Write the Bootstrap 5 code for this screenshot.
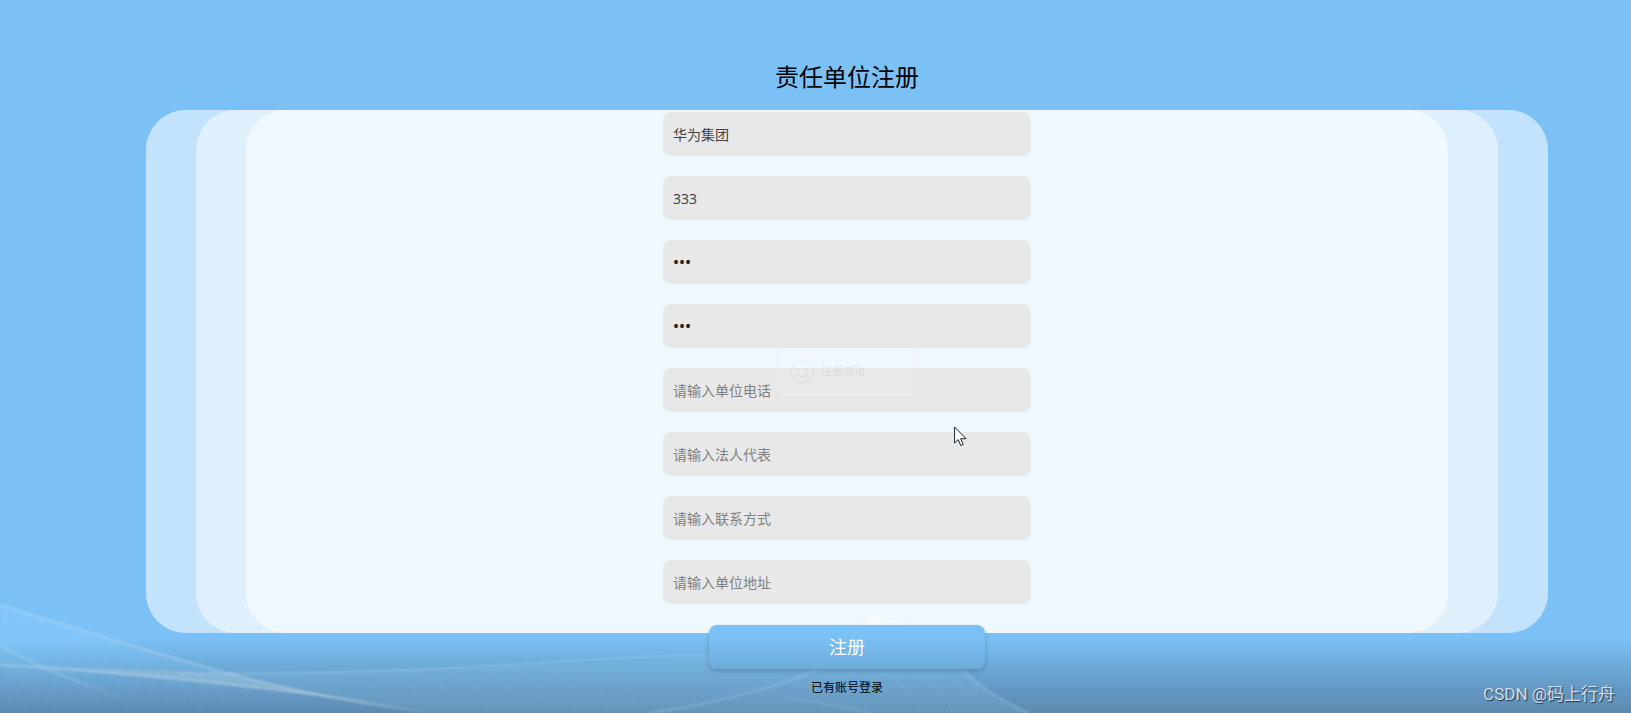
<!DOCTYPE html>
<html lang="zh-CN">
<head>
<meta charset="utf-8">
<meta name="viewport" content="width=device-width, initial-scale=1">
<title>责任单位注册</title>
<link href="https://cdn.jsdelivr.net/npm/bootstrap@5.3.0/dist/css/bootstrap.min.css" rel="stylesheet">
<style>
  body { font-family: "Noto Sans", "Noto Sans CJK SC", sans-serif; background: #7cc1f6; color: #000; }
  .page { padding: 60px 83px 16px 146px; isolation: isolate; }
  .scenery { z-index: -1; height: 113px; }
  .page-title { font-size: 24px; line-height: 34px; margin-bottom: 16px; font-weight: 400; }
  .layer { border-radius: 40px; box-shadow: inset 0 0 1px rgba(255,255,255,.5); }
  .layer-outer { background: rgba(255,255,255,.54); padding: 0 50px; }
  .layer-middle { background: rgba(255,255,255,.47); padding: 0 50px; }
  .layer-inner { background: rgba(255,255,255,.5); padding: 2px 16px 29px; }
  .fields { width: 368px; max-width: 100%; gap: 20px; }
  .field, .field:focus { height: 44px; padding: 0 10px; border: 0; border-radius: 8px; background: #e8e8e8; color: #444; font-size: 14px; }
  .field[type=password] { font-size: 16px; color: #222; }
  .field::placeholder { color: #808080; opacity: 1; }
  .submit, .submit:hover { width: 276px; max-width: 100%; height: 44px; margin-top: -8px; padding: 0; border: 0; border-radius: 8px; color: #fff; font-size: 18px; font-weight: 400;
    background: linear-gradient(#7cc1f6 25%, #6cabd9); box-shadow: 0 2px 5px rgba(0,0,0,.2); }
  .login-link { font-size: 12px; line-height: 18px; margin-top: 10px; color: #000; }
  .toast-note { width: 138px; height: 50px; padding: 0 11px; gap: 7px; opacity: .08; background: #fff; border: 1px solid #ccc; font-size: 11px; color: #333; }
  .pointer { left: 79%; top: -6px; }
  .watermark { right: 16px; bottom: 6px; font-family: Roboto, "Noto Sans CJK SC", sans-serif; font-size: 17px; line-height: 26px; color: #d3dfe8; text-shadow: 1px 1px 1px #23384a; }
</style>
</head>
<body>
<main class="page position-relative min-vh-100 overflow-hidden">
  <div class="scenery position-absolute start-0 bottom-0 w-100" aria-hidden="true">
    <svg class="d-block w-100 overflow-visible" height="113" viewBox="0 0 1631 113" preserveAspectRatio="none" fill="none">
      <defs>
        <linearGradient id="dusk" x1="0" y1="0" x2="0" y2="1"><stop offset=".33" stop-color="#7cc1f6"/><stop offset=".56" stop-color="#6dadda"/><stop offset=".78" stop-color="#6499c5"/><stop offset="1" stop-color="#5a8ab0"/></linearGradient>
        <linearGradient id="veil" x1="0" y1="0" x2="0" y2="1"><stop offset="0" stop-color="#8dcdff" stop-opacity=".45"/><stop offset="1" stop-color="#8dcdff" stop-opacity="0"/></linearGradient>
        <linearGradient id="fadeRight" gradientUnits="userSpaceOnUse" x1="0" y1="0" x2="430" y2="0"><stop offset="0" stop-color="#b4dcf8" stop-opacity=".5"/><stop offset=".75" stop-color="#c3d2dc" stop-opacity=".45"/><stop offset="1" stop-color="#c3d2dc" stop-opacity="0"/></linearGradient>
        <linearGradient id="fadeShort" gradientUnits="userSpaceOnUse" x1="0" y1="0" x2="130" y2="0"><stop offset="0" stop-color="#b4dcf8" stop-opacity=".5"/><stop offset=".4" stop-color="#b4d4e8" stop-opacity=".4"/><stop offset="1" stop-color="#b4d4e8" stop-opacity="0"/></linearGradient>
        <filter id="soft" x="-5%" y="-20%" width="110%" height="140%"><feGaussianBlur stdDeviation=".8"/></filter>
      </defs>
      <rect width="1631" height="113" fill="url(#dusk)"/>
      <g filter="url(#soft)">
        <path d="M0 5C70 27 150 52 231 74C290 90 350 104 420 113H0Z" fill="url(#veil)"/>
        <path d="M45 68Q150 68 231 74Q290 89 340 98Q200 82 45 68" fill="#b9c9d2" opacity=".3"/>
        <path d="M140 72Q300 77 709 58Q780 62 820 70Q740 103 650 113H420Q280 88 140 72" fill="#8bc3e8" opacity=".2"/>
        <path d="M872 12Q915 22 962 70Q990 96 1029 113H650Q740 103 820 70Q860 44 872 12" fill="#8fc7ec" opacity=".2"/>
        <path d="M872 12L910 23L940 36H850Z" fill="#fff" opacity=".3"/>
        <g stroke-width="2">
          <path stroke="url(#fadeRight)" d="M0 5C70 27 150 52 231 74Q310 96 420 112"/>
          <path stroke="url(#fadeShort)" d="M0 45Q25 59 45 68T90 86T145 110"/>
          <path stroke="url(#fadeRight)" d="M0 65Q110 71 200 81T320 95T430 113"/>
        </g>
        <g stroke="#a9d4ee" stroke-opacity=".35" stroke-width="2">
          <path d="M180 73Q360 75 540 63T709 58"/>
          <path d="M650 113Q750 98 820 69M962 70Q990 96 1029 113"/>
          <path d="M785 98Q835 104 872 113" opacity=".6"/>
        </g>
      </g>
      <g stroke="#a9d4ee" stroke-opacity=".07">
        <path d="M15 12Q28 50 0 88M29 16Q43 60 8 103M43 20Q57 68 20 112M57 25Q71 77 35 113M71 30Q85 83 50 113M86 34Q99 88 66 113M102 39Q114 92 84 113M118 44Q129 95 102 113M134 49Q144 97 121 113M150 53Q159 98 140 113M166 58Q174 100 159 113M182 77Q190 103 178 113M200 78Q209 105 196 113M219 79Q228 104 215 113"/>
        <path d="M360 76Q390 94 385 109M390 74Q425 94 420 113M420 72Q459 92 455 113M450 70Q489 90 485 113M480 68Q519 88 515 113M510 66Q549 86 545 113M540 65Q579 84 575 113M570 64Q609 83 605 113M600 63Q639 82 635 113M850 72Q890 92 892 113M880 72Q920 92 922 113M910 72Q950 92 952 113M940 72Q980 95 982 113"/>
      </g>
    </svg>
  </div>

  <h1 class="page-title text-center">责任单位注册</h1>

  <form class="d-flex flex-column align-items-center">
    <div class="layer layer-outer w-100">
      <div class="layer layer-middle">
        <div class="layer layer-inner position-relative">
          <div class="fields d-flex flex-column mx-auto">
            <input class="form-control field" aria-label="单位名称" type="text" value="华为集团">
            <input class="form-control field" aria-label="账号" type="text" value="333">
            <input class="form-control field" aria-label="密码" type="password" value="333">
            <input class="form-control field" aria-label="确认密码" type="password" value="333">
            <input class="form-control field" aria-label="单位电话" type="text" placeholder="请输入单位电话">
            <div class="position-relative">
              <input class="form-control field" aria-label="法人代表" type="text" placeholder="请输入法人代表">
              <svg class="pointer position-absolute" width="13" height="21" viewBox="0 0 13 21" aria-hidden="true"><path d="M.6 1V17L4.2 13.6L6.8 19.6L9.2 18.5L6.7 12.7H12Z" fill="#fff" stroke="#1c2230" stroke-width="1"/></svg>
            </div>
            <input class="form-control field" aria-label="联系方式" type="text" placeholder="请输入联系方式">
            <input class="form-control field" aria-label="单位地址" type="text" placeholder="请输入单位地址">
          </div>
          <div class="toast-note position-absolute top-50 start-50 translate-middle d-flex align-items-center" role="status">
            <svg width="24" height="24" viewBox="0 0 24 24" fill="none" stroke="#2fb98c" stroke-width="1.6" aria-hidden="true"><circle cx="12" cy="12" r="11"/><path d="M6 14Q12 20 18 14" stroke-linecap="round"/><circle cx="8" cy="9" r="1" fill="#2fb98c"/><circle cx="16" cy="9" r="1" fill="#2fb98c"/></svg>
            <span>注册成功</span>
          </div>
        </div>
      </div>
    </div>
    <button class="btn submit position-relative" type="submit">注册</button>
    <a class="login-link text-decoration-none" href="#">已有账号登录</a>
  </form>

  <div class="watermark position-absolute">CSDN @码上行舟</div>
</main>
<script src="https://cdn.jsdelivr.net/npm/bootstrap@5.3.0/dist/js/bootstrap.bundle.min.js"></script>
</body>
</html>
